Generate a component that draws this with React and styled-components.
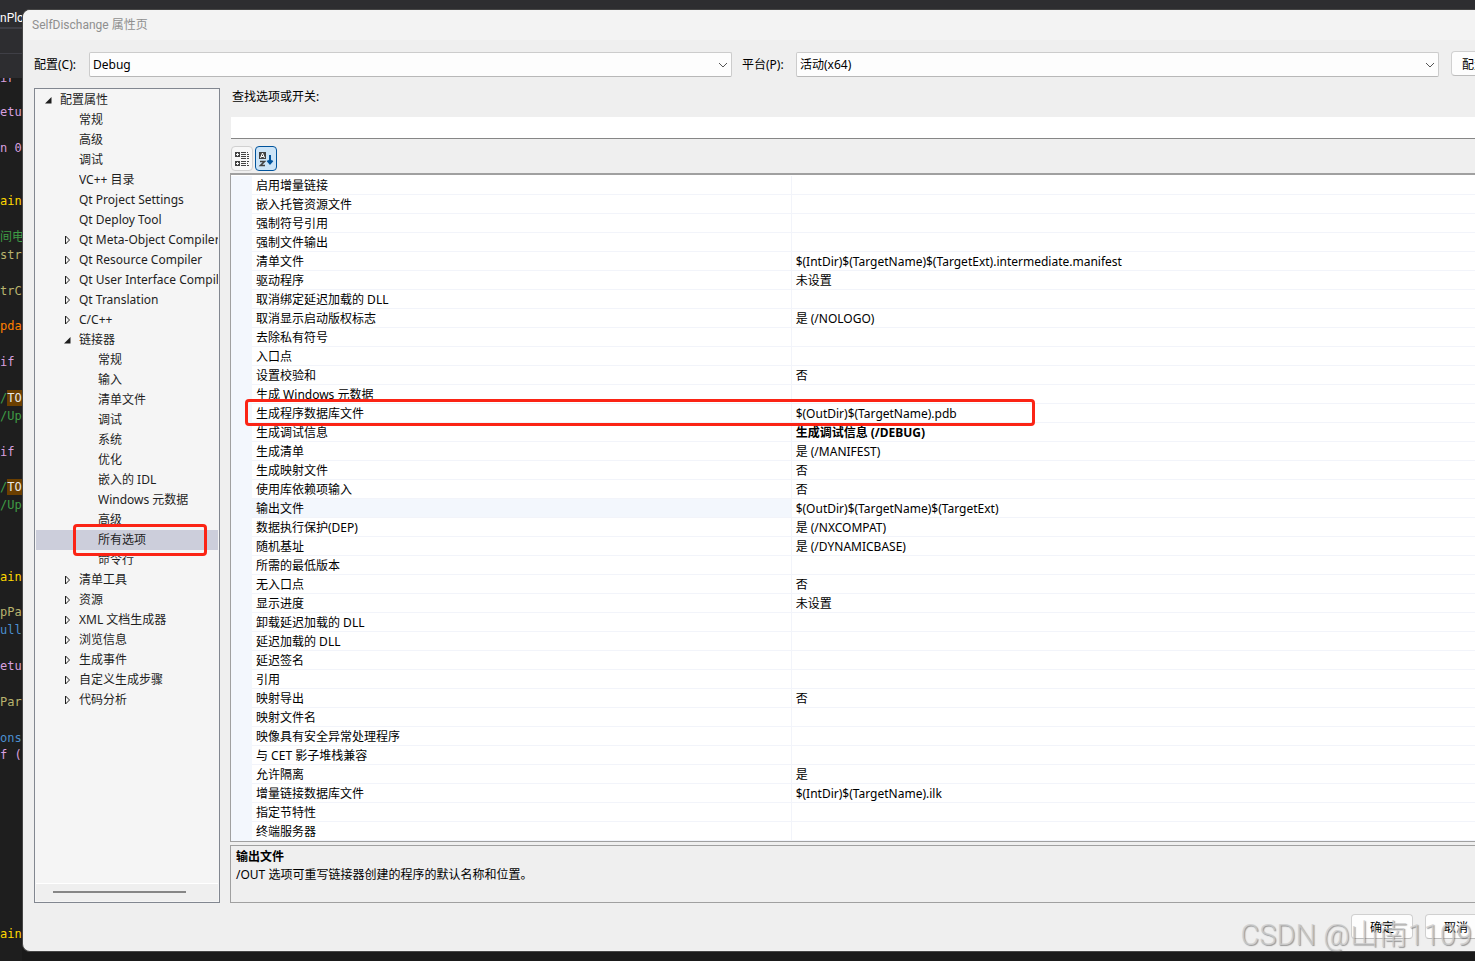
import React from 'react';
import styled, { createGlobalStyle, css } from 'styled-components';

const uiFont = "'Noto Sans', 'Noto Sans CJK SC', sans-serif";
const titleFont = "Roboto, 'Noto Sans CJK SC', sans-serif";
const codeFont = "'DejaVu Sans Mono', 'Noto Sans CJK SC', monospace";

const codeColors = {
  keyword: '#d8a0df',
  number: '#b5cea8',
  macro: '#ffd700',
  comment: '#3f9c45',
  func: '#b9b36e',
  member: '#ff8000',
  type: '#4b8fcf',
  todo: '#e8e8e8',
};

// one entry per editor line, empty lines stay null
const codeLines = [
  null, ['etur', 'keyword'], null, ['n 0', 'keyword'], null, null, ['ain', 'macro'],
  null, ['间电', 'comment'], ['str', 'func'], null, ['trC', 'func'], null,
  ['pda', 'member'], null, ['if', 'keyword'], null, ['/', 'comment', 'TO'],
  ['/Up', 'comment'], null, ['if', 'keyword'], null, ['/', 'comment', 'TO'],
  ['/Up', 'comment'], null, null, null, ['ain', 'macro'], null, ['pPa', 'func'],
  ['ull', 'type'], null, ['etu', 'keyword'], null, ['Par', 'func'], null,
  ['ons', 'type'], ['f (', 'keyword'], null, null, null, null, null, null, null,
  null, null, ['ain', 'macro'], null,
];

const treeItems = [
  { level: 0, label: '配置属性', state: 'open' },
  { level: 1, label: '常规' },
  { level: 1, label: '高级' },
  { level: 1, label: '调试' },
  { level: 1, label: 'VC++ 目录' },
  { level: 1, label: 'Qt Project Settings' },
  { level: 1, label: 'Qt Deploy Tool' },
  { level: 1, label: 'Qt Meta-Object Compiler', state: 'closed' },
  { level: 1, label: 'Qt Resource Compiler', state: 'closed' },
  { level: 1, label: 'Qt User Interface Compiler', state: 'closed' },
  { level: 1, label: 'Qt Translation', state: 'closed' },
  { level: 1, label: 'C/C++', state: 'closed' },
  { level: 1, label: '链接器', state: 'open' },
  { level: 2, label: '常规' },
  { level: 2, label: '输入' },
  { level: 2, label: '清单文件' },
  { level: 2, label: '调试' },
  { level: 2, label: '系统' },
  { level: 2, label: '优化' },
  { level: 2, label: '嵌入的 IDL' },
  { level: 2, label: 'Windows 元数据' },
  { level: 2, label: '高级' },
  { level: 2, label: '所有选项', selected: true },
  { level: 2, label: '命令行' },
  { level: 1, label: '清单工具', state: 'closed' },
  { level: 1, label: '资源', state: 'closed' },
  { level: 1, label: 'XML 文档生成器', state: 'closed' },
  { level: 1, label: '浏览信息', state: 'closed' },
  { level: 1, label: '生成事件', state: 'closed' },
  { level: 1, label: '自定义生成步骤', state: 'closed' },
  { level: 1, label: '代码分析', state: 'closed' },
];

const properties = [
  ['启用增量链接', ''],
  ['嵌入托管资源文件', ''],
  ['强制符号引用', ''],
  ['强制文件输出', ''],
  ['清单文件', '$(IntDir)$(TargetName)$(TargetExt).intermediate.manifest'],
  ['驱动程序', '未设置'],
  ['取消绑定延迟加载的 DLL', ''],
  ['取消显示启动版权标志', '是 (/NOLOGO)'],
  ['去除私有符号', ''],
  ['入口点', ''],
  ['设置校验和', '否'],
  ['生成 Windows 元数据', ''],
  ['生成程序数据库文件', '$(OutDir)$(TargetName).pdb'],
  ['生成调试信息', '生成调试信息 (/DEBUG)'],
  ['生成清单', '是 (/MANIFEST)'],
  ['生成映射文件', '否'],
  ['使用库依赖项输入', '否'],
  ['输出文件', '$(OutDir)$(TargetName)$(TargetExt)'],
  ['数据执行保护(DEP)', '是 (/NXCOMPAT)'],
  ['随机基址', '是 (/DYNAMICBASE)'],
  ['所需的最低版本', ''],
  ['无入口点', '否'],
  ['显示进度', '未设置'],
  ['卸载延迟加载的 DLL', ''],
  ['延迟加载的 DLL', ''],
  ['延迟签名', ''],
  ['引用', ''],
  ['映射导出', '否'],
  ['映射文件名', ''],
  ['映像具有安全异常处理程序', ''],
  ['与 CET 影子堆栈兼容', ''],
  ['允许隔离', '是'],
  ['增量链接数据库文件', '$(IntDir)$(TargetName).ilk'],
  ['指定节特性', ''],
  ['终端服务器', ''],
];

function Arrow({ state }) {
  return (
    <ArrowSvg viewBox="0 0 8 12">
      {state === 'open' && <path d="M7.500 3v6.500H1z" fill="#1e1e1e" />}
      {state === 'closed' && <path d="M2.500 2v8L6.500 6z" fill="none" stroke="#1e1e1e" />}
    </ArrowSvg>
  );
}

function CategoryIcon() {
  return (
    <svg width="16" height="16" viewBox="0 0 16 16" fill="#424242">
      <path fillRule="evenodd" d="M1 1h5v5H1zM3 2v1H2v1h1v1h1V4h1V3H4V2z" />
      <path fillRule="evenodd" d="M1 10h5v5H1zM3 11v1H2v1h1v1h1v-1h1v-1H4v-1z" />
      <path d="M7 1h5v1H7zM7 3h5v1H7zM7 5h5v1H7zM7 7h5v1H7zM7 10h5v1H7zM7 12h5v1H7zM7 14h5v1H7z" />
      <path d="M13 1h1v1h-1zM13 3h2v1h-2zM13 5h2v1h-2zM13 7h2v1h-2zM13 10h2v1h-2zM13 12h1v1h-1zM13 14h2v1h-2z" />
    </svg>
  );
}

function SortIcon() {
  return (
    <svg width="16" height="16" viewBox="0 0 16 16">
      <path d="M1 1h7v7H1z" fill="#424242" />
      <path d="M2.500 7l2-5 2 5M3.200 5.500h2.600" fill="none" stroke="#fff" />
      <path d="M2 10.500h4.500L2.500 14.500H7" fill="none" stroke="#424242" strokeWidth="1.6" />
      <path d="M12 4v8M9.500 9.500l2.500 3 2.500-3" fill="none" stroke="#00539c" strokeWidth="2" />
    </svg>
  );
}

function ComboBox({ id, label, value, indent }) {
  return (
    <>
      <FieldLabel htmlFor={id} $indent={indent}>{label}</FieldLabel>
      <SelectWrap>
        <Select id={id} defaultValue={value}>
          <option>{value}</option>
        </Select>
        <Chevron viewBox="0 0 10 6">
          <path d="M1 1l4 4 4-4" fill="none" stroke="#555" />
        </Chevron>
      </SelectWrap>
    </>
  );
}

export default function App() {
  return (
    <Screen>
      <GlobalStyle />
      <Editor>
        <EditorTab>nPlot</EditorTab>
        <EditorBar />
        <EditorBar />
        <CutLine>ir</CutLine>
        <Code>
          {codeLines.map((line, i) => (
            <CodeLine key={i} $kind={line && line[1]}>
              {line && line[0]}
              {line && line[2] && <Todo>{line[2]}</Todo>}
            </CodeLine>
          ))}
        </Code>
      </Editor>
      <Stage>
        <Dialog>
          <TitleBar>SelfDischange 属性页</TitleBar>
          <Body>
            <ConfigRow>
              <ComboBox id="config" label="配置(C):" value="Debug" />
              <ComboBox id="platform" label="平台(P):" value="活动(x64)" indent />
              <ManagerButton>配置</ManagerButton>
            </ConfigRow>
            <Main>
              <TreePanel>
                <Tree role="tree">
                  {treeItems.map((item, i) => (
                    <TreeItem
                      key={i}
                      role="treeitem"
                      aria-selected={!!item.selected}
                      $level={item.level}
                      $selected={item.selected}
                    >
                      <Arrow state={item.state} />
                      <TreeLabel>{item.label}</TreeLabel>
                      {item.selected && <TreeMark />}
                    </TreeItem>
                  ))}
                </Tree>
                <ScrollTrack>
                  <ScrollThumb />
                </ScrollTrack>
              </TreePanel>
              <Details>
                <SearchLabel htmlFor="search">查找选项或开关:</SearchLabel>
                <SearchInput id="search" type="text" />
                <Toolbar>
                  <ToolButton aria-label="按类别"><CategoryIcon /></ToolButton>
                  <ToolButton aria-label="按字母顺序" $active><SortIcon /></ToolButton>
                </Toolbar>
                <GridPanel>
                  <Grid>
                    <colgroup>
                      <GutterCol />
                      <NameCol />
                      <col />
                    </colgroup>
                    <tbody>
                      {properties.map(([name, value], i) => (
                        <tr key={i}>
                          <GutterCell />
                          <NameCell $selected={name === '输出文件'}>{name}</NameCell>
                          <ValueCell $changed={name === '生成调试信息'}>{value}</ValueCell>
                        </tr>
                      ))}
                    </tbody>
                  </Grid>
                  <RowMark />
                </GridPanel>
                <Description>
                  <strong>输出文件</strong>
                  <p>/OUT 选项可重写链接器创建的程序的默认名称和位置。</p>
                </Description>
              </Details>
            </Main>
            <Footer>
              <Button>确定</Button>
              <Button>取消</Button>
            </Footer>
          </Body>
        </Dialog>
      </Stage>
      <Watermark>CSDN @山南1109</Watermark>
    </Screen>
  );
}

// ----- Styled
const GlobalStyle = createGlobalStyle`
  * {
    box-sizing: border-box;
  }

  body {
    margin: 0;
    overflow: hidden;
    background-color: #1b1b1b;
    font-family: ${uiFont};
    font-size: 12px;
    color: #000;
  }

  button, input, select {
    font: inherit;
    color: inherit;
  }
`;

const Screen = styled.div`
  position: relative;
  display: flex;
  height: 100vh;
  overflow: hidden;
`;

const Editor = styled.div`
  display: flex;
  flex-direction: column;
  flex: 0 0 22px;
  background-color: #1e1e1e;
  font-family: ${codeFont};
  white-space: pre;
  overflow: hidden;
`;

const EditorTab = styled.div`
  height: 28px;
  padding-top: 9px;
  background-color: #2d2d30;
  border-bottom: 1px solid #3f3f46;
  font-family: ${titleFont};
  line-height: 18px;
  color: #fff;
`;

const EditorBar = styled.div`
  height: 25px;
  background-color: #2d2d30;
  border-top: 1px solid #3f3f46;
`;

const CutLine = styled.div`
  display: flex;
  align-items: flex-end;
  height: 7px;
  line-height: 14px;
  color: ${codeColors.keyword};
  overflow: hidden;
`;

const Code = styled.div`
  display: grid;
  grid-auto-rows: minmax(0, 1fr);
  flex: 1;
  min-height: 0;
`;

const CodeLine = styled.div`
  line-height: 18px;
  color: ${({ $kind }) => codeColors[$kind] || '#dcdcdc'};
`;

const Todo = styled.span`
  padding: 1px 0;
  background-color: #6b3f00;
  color: ${codeColors.todo};
`;

const Stage = styled.div`
  display: flex;
  flex: 1;
  min-width: 0;
  padding: 9px 0;
  background: linear-gradient(#2d2d30 50%, #1a1a1a 50%);
`;

const Dialog = styled.div`
  display: flex;
  flex-direction: column;
  flex: 1;
  min-width: 0;
  border: 1px solid #454545;
  border-right: none;
  border-radius: 8px 0 0 8px;
  background-color: #efefef;
  overflow: hidden;
`;

const TitleBar = styled.div`
  flex: 0 0 30px;
  padding-left: 9px;
  background-color: #f3f3f3;
  font-family: ${titleFont};
  line-height: 30px;
  color: #8f8f8f;
`;

// the dialog runs past the right edge of the screen
const Body = styled.div`
  display: flex;
  flex-direction: column;
  flex: 1;
  width: calc(100% + 12px);
  min-height: 0;
  padding: 12px 0 12px 11px;
`;

const ConfigRow = styled.div`
  display: flex;
  align-items: center;
  height: 25px;
`;

const FieldLabel = styled.label`
  flex: 0 0 ${({ $indent }) => ($indent ? '64px' : '55px')};
  padding-bottom: 2px;
  padding-left: ${({ $indent }) => ($indent ? '10px' : '0')};
`;

const SelectWrap = styled.div`
  position: relative;
  flex: 1;
`;

const Select = styled.select`
  display: block;
  width: 100%;
  height: 25px;
  padding: 0 3px;
  appearance: none;
  border: 1px solid #ccc;
  border-bottom-color: #b8b8b8;
  border-radius: 2px;
  background-color: #fdfdfd;
`;

const Chevron = styled.svg`
  position: absolute;
  top: 10px;
  right: 4px;
  width: 10px;
  height: 6px;
  pointer-events: none;
`;

const Button = styled.button`
  width: 62px;
  height: 25px;
  padding: 0;
  border: 1px solid #d0d0d0;
  border-bottom-color: #bcbcbc;
  border-radius: 4px;
  background-color: #fdfdfd;
`;

const ManagerButton = styled(Button)`
  width: 36px;
  margin-bottom: 2px;
  margin-left: 12px;
  padding-left: 10px;
  text-align: left;
  white-space: nowrap;
`;

const Main = styled.div`
  display: flex;
  gap: 10px;
  flex: 1;
  min-height: 0;
  margin: 11px 0;
`;

const TreePanel = styled.div`
  display: flex;
  flex-direction: column;
  flex: 0 0 186px;
  min-width: 0;
  padding: 1px;
  border: 1px solid #828790;
  background-color: #f5f5f5;
`;

const Tree = styled.ul`
  flex: 1;
  min-height: 0;
  margin: 0;
  padding: 0;
  list-style: none;
  color: #1e1e1e;
`;

const TreeItem = styled.li`
  position: relative;
  display: flex;
  align-items: center;
  gap: 8px;
  height: 20px;
  padding-left: ${({ $level }) => 8 + $level * 19}px;
  white-space: nowrap;
  ${({ $selected }) => $selected && css`
    background-color: #cccedb;
  `}
`;

const TreeLabel = styled.span`
  flex: 1;
  min-width: 0;
  line-height: 20px;
  overflow: hidden;
`;

const ArrowSvg = styled.svg`
  flex: 0 0 8px;
  height: 12px;
`;

const redMark = css`
  position: absolute;
  z-index: 1;
  border: 3px solid #fb2415;
  border-radius: 4px;
  pointer-events: none;
`;

const TreeMark = styled.span`
  ${redMark}
  top: -6px;
  bottom: -6px;
  left: 37px;
  right: 11px;
`;

const ScrollTrack = styled.div`
  height: 18px;
  padding: 7px 32px 0 17px;
  border-top: 1px solid #fff;
  background-color: #efefef;
`;

const ScrollThumb = styled.div`
  height: 2px;
  background-color: #868686;
`;

const Details = styled.div`
  display: flex;
  flex-direction: column;
  flex: 1;
  min-width: 0;
`;

const SearchLabel = styled.label`
  padding-left: 2px;
  line-height: 18px;
`;

const SearchInput = styled.input`
  height: 22px;
  margin: 11px 0 0 1px;
  padding: 0 4px;
  border: none;
  border-bottom: 1px solid #868686;
  background-color: #fff;
`;

const Toolbar = styled.div`
  display: flex;
  gap: 2px;
  margin: 7px 0 2px 1px;
`;

const ToolButton = styled.button`
  display: flex;
  justify-content: center;
  align-items: center;
  width: 22px;
  height: 25px;
  padding: 0;
  border: 1px solid ${({ $active }) => ($active ? '#00539c' : '#d0d0d0')};
  border-radius: 4px;
  background-color: ${({ $active }) => ($active ? '#cce4f7' : '#f7f7f7')};
`;

const GridPanel = styled.div`
  position: relative;
  flex: 1;
  min-height: 0;
  padding-top: 1px;
  border: 1px solid #a0a0a0;
  border-top-width: 2px;
  background-color: #fff;
`;

const Grid = styled.table`
  width: 100%;
  table-layout: fixed;
  border-collapse: separate;
  border-spacing: 0;
`;

const GutterCol = styled.col`
  width: 21px;
`;

const NameCol = styled.col`
  width: 43%;
`;

const Cell = styled.td`
  height: 19px;
  padding: 2px 4px 0;
  border-bottom: 1px solid #f2f4fa;
  line-height: 16px;
  white-space: nowrap;
`;

const GutterCell = styled(Cell)`
  padding: 0;
  border-bottom-color: #f3f7fd;
  background-color: #f3f7fd;
`;

const NameCell = styled(Cell)`
  border-right: 1px solid #f2f4fa;
  background-color: ${({ $selected }) => ($selected ? '#f3f7fd' : '#fff')};
`;

const ValueCell = styled(Cell)`
  font-weight: ${({ $changed }) => ($changed ? 700 : 400)};
`;

const RowMark = styled.div`
  ${redMark}
  top: 224px;
  left: 14px;
  width: 790px;
  height: 27px;
`;

const Description = styled.div`
  flex: 0 0 58px;
  margin-top: 3px;
  padding: 2px 5px;
  border: 1px solid #a0a0a0;
  line-height: 18px;

  strong {
    display: block;
  }

  p {
    margin: 0;
  }
`;

const Footer = styled.div`
  display: flex;
  justify-content: flex-end;
  gap: 12px;
`;

const Watermark = styled.div`
  position: absolute;
  right: 3px;
  bottom: 6px;
  font-family: ${titleFont};
  font-size: 29px;
  font-weight: 300;
  line-height: 40px;
  color: rgba(205, 205, 205, 0.8);
  text-shadow: 1px 1px 1px rgba(90, 90, 90, 0.6);
  pointer-events: none;
`;
